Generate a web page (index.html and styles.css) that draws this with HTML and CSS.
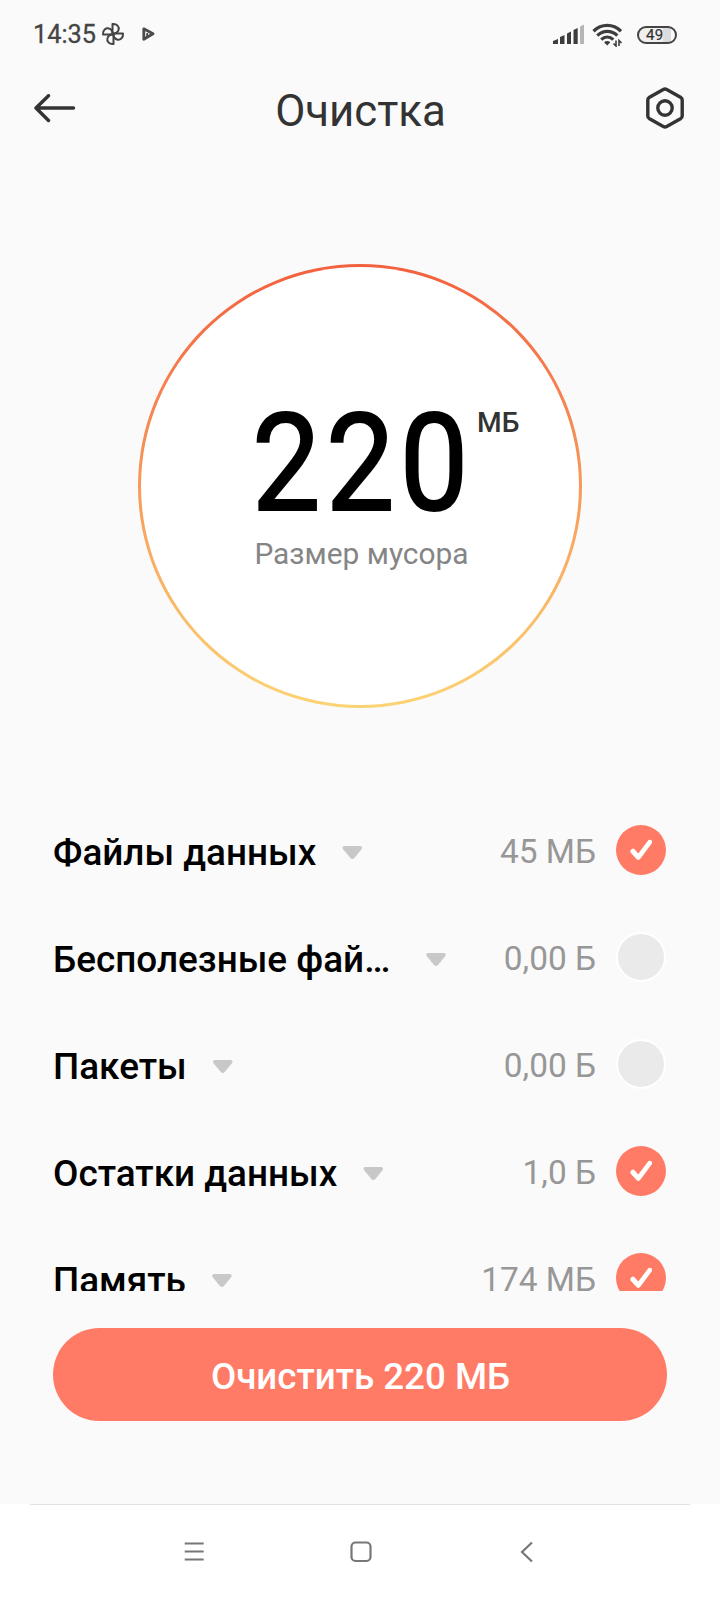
FILE: index.html
```html
<!DOCTYPE html>
<html lang="ru">
<head>
<meta charset="utf-8">
<title>Очистка</title>
<link rel="stylesheet" href="styles.css">
</head>
<body>
<div class="screen">
  <div class="status">
    <span class="time">14:35</span>
    <svg class="fan" width="24" height="24" viewBox="-12 -12 24 24" fill="none" stroke="#444" stroke-width="2" stroke-linejoin="round">
      <path d="M-.5 0V-10C4-10.500 6.500-7 5.500-4C5-2 3-.5-.5 0"/>
      <path d="M-.5 0V-10C4-10.500 6.500-7 5.500-4C5-2 3-.5-.5 0" transform="rotate(90)"/>
      <path d="M-.5 0V-10C4-10.500 6.500-7 5.500-4C5-2 3-.5-.5 0" transform="rotate(180)"/>
      <path d="M-.5 0V-10C4-10.500 6.500-7 5.500-4C5-2 3-.5-.5 0" transform="rotate(270)"/>
    </svg>
    <svg class="play" width="13" height="14" viewBox="0 0 13 14" fill="none" stroke="#4a4a4a" stroke-width="2.800" stroke-linejoin="round">
      <path d="M1.800 1.800L11 6.800L1.800 12.300Z"/><path d="M5.200 10.500V6" stroke-width="1.800"/>
    </svg>
    <svg class="signal" width="31" height="21" viewBox="0 0 31 21" fill="#3d3d3d">
      <path d="M0 20V17L5 15V20ZM7 20V13L11.500 11V20ZM14 20V9.500L18 7.500V20ZM20.500 20V6L24.700 4V20Z"/>
      <path fill="#b5b5b5" d="M27 20V2.500L31 .5V20Z"/>
    </svg>
    <svg class="wifi" width="31" height="24" viewBox="0 0 31 24" fill="none" stroke="#3d3d3d" stroke-width="3.300">
      <path d="M1.500 8.200C9.500.4 21 .4 29 8.200"/>
      <path d="M5.300 12.600C11 7 19.500 7 25.300 12.600"/>
      <path d="M9.200 16.600C12.800 13.200 17.700 13.200 21.300 16.600"/>
      <path d="M12 19.200Q15.200 17 18.400 19.200L15.200 22.500Z" fill="#3d3d3d" stroke="none"/>
      <path d="M24 17.500V23L21.500 20.500M27 23V17.500L29.500 20" stroke-width="1.600"/>
    </svg>
    <div class="battery"><span>49</span></div>
  </div>
  <header class="header">
    <svg width="42" height="29" viewBox="0 0 42 29" fill="none" stroke="#333" stroke-width="3.400" stroke-linecap="round" stroke-linejoin="round"><path d="M39.500 14H2M14.500 1.700L2 14L14.500 26.500"/></svg>
    <h1>Очистка</h1>
    <svg width="40" height="42" viewBox="0 0 40 42" fill="none" stroke="#333" stroke-width="3.400" stroke-linejoin="round"><path d="M18.300 2.500Q20 1.600 21.700 2.500L35.500 10.200Q37.200 11.200 37.200 13V29Q37.200 30.800 35.500 31.800L21.700 39.500Q20 40.400 18.300 39.500L4.500 31.800Q2.800 30.800 2.800 29V13Q2.800 11.200 4.500 10.200Z"/><circle cx="20" cy="21" r="7.200"/></svg>
  </header>
  <section class="gauge">
    <div class="ring">
      <div class="amount"><span class="num">220</span><span class="unit">МБ</span></div>
      <div class="caption">Размер мусора</div>
    </div>
  </section>
  <ul class="list">
    <li><span class="name">Файлы данных</span><i class="caret"></i><span class="size">45 МБ</span><span class="check on"></span></li>
    <li><span class="name">Бесполезные файлы</span><i class="caret"></i><span class="size">0,00 Б</span><span class="check"></span></li>
    <li><span class="name">Пакеты</span><i class="caret"></i><span class="size">0,00 Б</span><span class="check"></span></li>
    <li><span class="name">Остатки данных</span><i class="caret"></i><span class="size">1,0 Б</span><span class="check on"></span></li>
    <li><span class="name">Память</span><i class="caret"></i><span class="size">174 МБ</span><span class="check on"></span></li>
  </ul>
  <button class="clean">Очистить 220 МБ</button>
  <nav class="nav">
    <svg width="22" height="22" viewBox="0 0 22 22" stroke="#777" stroke-width="2"><path d="M.7 2.500H19.700M.7 10.500H19.700M.7 18.500H19.700"/></svg>
    <svg width="22" height="22" viewBox="0 0 22 22" fill="none" stroke="#777" stroke-width="2.200"><rect x="1.500" y="1.500" width="19" height="18.500" rx="4"/></svg>
    <svg width="22" height="22" viewBox="0 0 22 22" fill="none" stroke="#777" stroke-width="2.200"><path d="M16 1.500L6 11L16 20.500"/></svg>
  </nav>
</div>
</body>
</html>
```
FILE: styles.css
```css
* { box-sizing: border-box; }
body { margin: 0; background: #fafafa; font-family: Roboto, "Noto Sans", sans-serif; }
.screen { width: 720px; height: 1600px; display: flex; flex-direction: column; overflow: hidden; }

.status { height: 68px; padding: 0 43px 0 33px; display: flex; align-items: center; flex: none; }
.time { width: 63px; font-size: 25.300px; color: #444; line-height: 30px; margin-top: 1px; -webkit-text-stroke: .3px #444; }
.fan { margin-left: 5px; }
.play { margin-left: 17px; }
.signal { margin-left: auto; }
.wifi { margin: 1px 0 0 8px; }
.battery { width: 40px; height: 18px; margin: 1px 0 0 14px; border: 2px solid #444; border-radius: 9px; background: linear-gradient(90deg, #f0f0f0 68%, #dcdcdc 68% 90%, #fafafa 90%); display: flex; padding-left: 7px; }
.battery span { font-size: 15px; line-height: 15px; color: #333; letter-spacing: .3px; -webkit-text-stroke: .2px #333; }

.header { height: 80px; padding: 0 35px 0 34px; display: flex; align-items: center; justify-content: space-between; flex: none; }
.header h1 { margin: 6px 0 0; font-size: 43.800px; line-height: 50px; font-weight: 400; color: #333; }

.gauge { height: 648px; padding-top: 116px; display: flex; justify-content: center; flex: none; }
.ring { width: 444px; height: 444px; border: 3px solid transparent; border-radius: 50%; background: linear-gradient(#fff, #fff) padding-box, linear-gradient(#f3603f, #fbd474) border-box; display: flex; flex-direction: column; align-items: center; padding-top: 125px; }
.amount { display: flex; width: 216px; height: 144px; }
.num { flex: none; width: 226px; font-size: 135.500px; line-height: 144px; color: #000; letter-spacing: 6px; transform: scaleX(.9); transform-origin: left; white-space: nowrap; -webkit-text-stroke: 2px #000; }
.unit { flex: none; font-size: 28.200px; line-height: 32px; font-weight: 500; color: #333; margin: 15px 0 0 -1px; }
.caption { font-size: 29.900px; line-height: 36px; color: #858585; padding-left: 3px; }

.list { list-style: none; margin: 0; padding: 0 54px 0 53px; height: 495px; overflow: hidden; flex: none; }
.list li { height: 107px; display: flex; align-items: center; }
.name { max-width: 347px; padding-top: 6px; font-size: 36.900px; line-height: 48px; font-weight: 500; color: #000; white-space: nowrap; overflow: hidden; text-overflow: ellipsis; }
.caret { width: 20px; height: 14px; margin: 7px 0 0 26px; background: #c8c8c8; clip-path: path("M2 0H18Q21 .5 19 3.500L12 12Q10 14 8 12L1 3.500Q-1 .5 2 0Z"); flex: none; }
.size { margin-left: auto; padding-top: 4px; font-size: 33.400px; line-height: 48px; color: #979797; white-space: nowrap; }
.check { width: 50px; height: 50px; margin-left: 20px; border-radius: 50%; border: 2px solid #fff; background: #eaeaea; flex: none; }
.check.on { border: 0; background: #ff7b65; }
.check.on::after { content: ""; display: block; width: 50px; height: 50px; background: #fff; clip-path: path("M17 24Q13.500 25 14.500 28L20.500 34.500Q22.500 36.500 24.500 34L36 18.500Q36.500 14.500 32.500 15.500L22.300 29L18.500 24.800Q17.800 24 17 24Z"); }

.clean { width: 614px; height: 93px; margin: 37px auto 0 53px; padding: 5px 0 0 1px; border: 0; border-radius: 47px; background: #ff7b65; color: #fff; font: 500 36.700px/48px Roboto, "Noto Sans", sans-serif; flex: none; }

.nav { height: 96px; margin-top: auto; padding: 0 182px 0 184px; background: linear-gradient(#e2e2e2, #e2e2e2) center top / 660px 1px no-repeat, #fff; display: flex; align-items: center; justify-content: space-between; flex: none; }
```
